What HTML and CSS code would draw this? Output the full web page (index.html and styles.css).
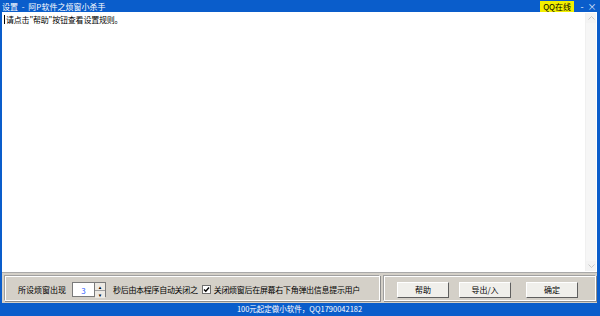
FILE: index.html
```html
<!DOCTYPE html>
<html lang="zh">

<head>
    <meta charset="utf-8">
    <title>设置 - 阿P软件之烦窗小杀手</title>
    <link rel="stylesheet" href="styles.css">
</head>

<body>
    <div class="window">
        <header class="titlebar">
            <span class="title">设置 - 阿P软件之烦窗小杀手</span>
            <span class="qq">QQ在线</span>
            <span class="ctl">-</span>
            <span class="ctl close">×</span>
        </header>
        <main class="editor">
            <div class="text"><span class="caret"></span>请点击"帮助"按钮查看设置规则。</div>
            <div class="scrollbar">
                <span class="arrow">
                    <svg width="7" height="4" viewBox="0 0 7 4"><path d="M0.5 3.5 L3.5 0.5 L6.5 3.5" fill="none" stroke="#c9c9c9" stroke-width="1"/></svg>
                </span>
                <span class="track"></span>
                <span class="arrow">
                    <svg width="7" height="4" viewBox="0 0 7 4"><path d="M0.5 0.5 L3.5 3.5 L6.5 0.5" fill="none" stroke="#c9c9c9" stroke-width="1"/></svg>
                </span>
            </div>
        </main>
        <section class="panel">
            <div class="group left">
                <span class="label">所设烦窗出现</span>
                <span class="spin">
                    <span class="spin-value">3</span>
                    <span class="spin-btns">
                        <span class="spin-btn">▴</span>
                        <span class="spin-btn">▾</span>
                    </span>
                </span>
                <span class="label tight">秒后由本程序自动关闭之</span>
                <span class="check">
                    <span class="box">
                        <svg width="7" height="7" viewBox="0 0 7 7"><path d="M1 3.5 L2.8 5.3 L6 1.5" fill="none" stroke="#000" stroke-width="1.4"/></svg>
                    </span>
                    <span class="label tight">关闭烦窗后在屏幕右下角弹出信息提示用户</span>
                </span>
            </div>
            <div class="group right">
                <button>帮助</button>
                <button>导出/入</button>
                <button>确定</button>
            </div>
        </section>
        <footer class="status">100元起定做小软件，QQ1790042182</footer>
    </div>
</body>

</html>
```

FILE: styles.css
```css
body {
    margin: 0;
    font-family: "Noto Sans CJK SC", "DejaVu Sans", sans-serif;
    font-size: 8px;
}

.window {
    width: 600px;
    height: 316px;
    display: flex;
    flex-direction: column;
    background-color: #0a5dcb;
    box-sizing: border-box;
    padding: 0 3px 0 2px;
}

.titlebar {
    height: 12px;
    display: flex;
    align-items: center;
    color: #ffffff;
    line-height: 11px;
}

.title {
    flex: 1;
    word-spacing: 2px;
}

.qq {
    background-color: #f2f000;
    color: #000;
    padding: 0 3px;
    height: 11px;
    margin-right: 3px;
}

.ctl {
    width: 10px;
    text-align: center;
    font-size: 9px;
    color: #e6eefc;
}

.editor {
    height: 260px;
    background-color: #ffffff;
    display: flex;
}

.text {
    flex: 1;
    padding: 3px 0 0 2px;
    line-height: 10px;
    color: #000;
    letter-spacing: -0.2px;
}

.caret {
    display: inline-block;
    width: 1px;
    height: 9px;
    background-color: #000;
    vertical-align: -1px;
    margin-right: 1px;
}

.scrollbar {
    width: 10px;
    margin: 1px 1px 1px 0;
    display: flex;
    flex-direction: column;
    background-color: #f6f6f6;
    border-left: 1px solid #f0f0f0;
}

.arrow {
    height: 10px;
    display: flex;
    align-items: center;
    justify-content: center;
    background-color: #f3f3f3;
}

.track {
    flex: 1;
}

.panel {
    height: 31px;
    background-color: #d4d0c8;
    display: flex;
    gap: 3px;
    padding: 2px 1px 2px 2px;
    box-sizing: border-box;
    border-top: 1px solid #a9a9a9;
}

.group {
    border: 1px solid #ffffff;
    border-top-color: #a0a0a0;
    border-left-color: #a0a0a0;
    box-shadow: inset 1px 1px 0 #ffffff, 1px 1px 0 #8c8c8c;
    display: flex;
    align-items: center;
}

.left {
    width: 376px;
    padding-left: 13px;
    padding-top: 3px;
    box-sizing: border-box;
}

.right {
    flex: 1;
    padding-left: 13px;
    padding-top: 3px;
    gap: 10px;
}

.label {
    color: #000;
    white-space: nowrap;
}

.tight {
    letter-spacing: -0.3px;
}

.spin {
    display: flex;
    margin: 0 7px 0 6px;
    height: 15px;
}

.spin-value {
    width: 21px;
    background-color: #fff;
    border: 1px solid #7a7a7a;
    border-right: none;
    color: #2a5cff;
    text-align: center;
    line-height: 15px;
}

.spin-btns {
    display: flex;
    flex-direction: column;
    width: 10px;
    border: 1px solid #7a7a7a;
}

.spin-btn {
    flex: 1;
    background-color: #ece9e3;
    font-size: 5px;
    line-height: 7px;
    text-align: center;
    border-bottom: 1px solid #a0a0a0;
}

.spin-btn:last-child {
    border-bottom: none;
}

.check {
    display: flex;
    align-items: center;
    gap: 3px;
    margin-left: 4px;
}

.box {
    width: 7px;
    height: 7px;
    background-color: #fff;
    border: 1px solid #6f6f6f;
    display: flex;
}

button {
    width: 52px;
    height: 16px;
    background-color: #f0efeb;
    border: 1px solid #ffffff;
    border-right-color: #5f5f5f;
    border-bottom-color: #5f5f5f;
    font-family: "Noto Sans CJK SC", "DejaVu Sans", sans-serif;
    font-size: 8px;
    line-height: 12px;
    color: #000;
    padding: 0;
}

button:nth-child(3) {
    margin-left: 5px;
}

.status {
    height: 13px;
    line-height: 12px;
    text-align: center;
    color: #ffffff;
    font-size: 7.5px;
}
```
